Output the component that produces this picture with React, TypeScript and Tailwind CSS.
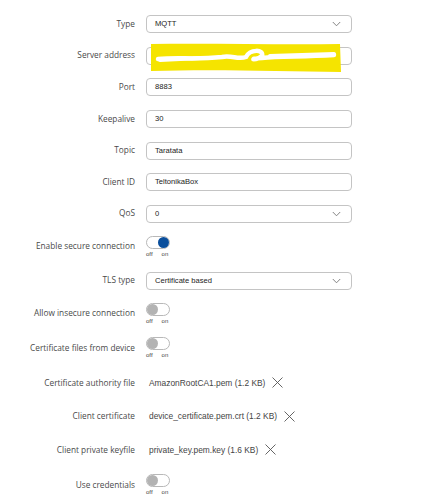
import React from "react";

const labelCls =
  "w-[135px] shrink-0 text-right text-[8.3px] text-[#4a4a4a] font-['Open_Sans',sans-serif]";

function Row({ h, label, children }: { h: string; label: string; children: React.ReactNode }) {
  return (
    <div className={`flex items-center ${h}`}>
      <div className={labelCls}>{label}</div>
      <div className="ml-[11px] flex items-center">{children}</div>
    </div>
  );
}

function Chevron() {
  return (
    <svg width="9" height="6" viewBox="0 0 9 6" className="mr-[10px]">
      <path d="M0.8 1 L4.5 4.8 L8.2 1" fill="none" stroke="#777" strokeWidth="0.9" />
    </svg>
  );
}

function Input({ value, select, highlight }: { value?: string; select?: boolean; highlight?: boolean }) {
  return (
    <div className="relative w-[206px] h-[18px] rounded-[4px] border border-[#c4c4c4] bg-white flex items-center justify-between">
      <span className="pl-[8px] text-[7.6px] font-medium text-[#222] font-['Liberation_Sans',Arial,sans-serif]">
        {value}
      </span>
      {select && <Chevron />}
      {highlight && (
        <svg
          className="absolute left-[3px] top-[-5px]"
          width="192"
          height="30"
          viewBox="0 0 192 30"
        >
          <path d="M1 1 C60 0 130 2 190 1 L191 29 C130 28 60 26 1 28 Z" fill="#f5e400" />
          <path
            d="M8 16 C30 14 45 17 72 14 C82 12 88 17 96 14 C100 6 114 6 112 13 C106 18 96 16 112 15 C130 13 150 14 184 12"
            fill="none"
            stroke="#ffffff"
            strokeWidth="4.5"
            strokeLinecap="round"
          />
          <path d="M10 17 L50 15 M120 13 L184 11" stroke="#fff" strokeWidth="4" strokeLinecap="round" />
        </svg>
      )}
    </div>
  );
}

function Toggle({ on }: { on?: boolean }) {
  return (
    <div className="flex flex-col items-start">
      <div className="relative w-[24px] h-[13px] rounded-full border border-[#b8b8b8] bg-white">
        <div
          className={
            on
              ? "absolute right-[0px] top-[0px] w-[11px] h-[11px] rounded-full bg-[#0b4f9c]"
              : "absolute left-[0px] top-[0px] w-[11px] h-[11px] rounded-full bg-[#b3b3b3]"
          }
        />
      </div>
      <div className="flex gap-[9px] text-[6px] leading-[8px] mt-[1px] text-[#444] font-['Liberation_Sans',Arial,sans-serif]">
        <span>off</span>
        <span>on</span>
      </div>
    </div>
  );
}

function XIcon() {
  return (
    <svg width="11" height="11" viewBox="0 0 11 11" className="ml-[7px]">
      <path d="M0.5 0.5 L10.5 10.5 M10.5 0.5 L0.5 10.5" stroke="#555" strokeWidth="0.9" fill="none" />
    </svg>
  );
}

function File({ name }: { name: string }) {
  return (
    <div className="flex items-center ml-[3px]">
      <span className="text-[8.4px] text-[#444] font-['Liberation_Sans',Arial,sans-serif]">{name}</span>
      <XIcon />
    </div>
  );
}

export default function App() {
  return (
    <div className="w-[433px] h-[500px] bg-white pt-[8px] overflow-hidden">
      <Row h="h-[32px]" label="Type">
        <Input value="MQTT" select />
      </Row>
      <Row h="h-[31px]" label="Server address">
        <Input highlight />
      </Row>
      <Row h="h-[32px]" label="Port">
        <Input value="8883" />
      </Row>
      <Row h="h-[32px]" label="Keepalive">
        <Input value="30" />
      </Row>
      <Row h="h-[31px]" label="Topic">
        <Input value="Taratata" />
      </Row>
      <Row h="h-[32px]" label="Client ID">
        <Input value="TeltonikaBox" />
      </Row>
      <Row h="h-[31px]" label="QoS">
        <Input value="0" select />
      </Row>
      <Row h="h-[35px]" label="Enable secure connection">
        <Toggle on />
      </Row>
      <Row h="h-[33px]" label="TLS type">
        <Input value="Certificate based" select />
      </Row>
      <Row h="h-[33px]" label="Allow insecure connection">
        <Toggle />
      </Row>
      <Row h="h-[36px]" label="Certificate files from device">
        <Toggle />
      </Row>
      <Row h="h-[34px]" label="Certificate authority file">
        <File name="AmazonRootCA1.pem (1.2 KB)" />
      </Row>
      <Row h="h-[33px]" label="Client certificate">
        <File name="device_certificate.pem.crt (1.2 KB)" />
      </Row>
      <Row h="h-[34px]" label="Client private keyfile">
        <File name="private_key.pem.key (1.6 KB)" />
      </Row>
      <Row h="h-[36px]" label="Use credentials">
        <Toggle />
      </Row>
    </div>
  );
}
